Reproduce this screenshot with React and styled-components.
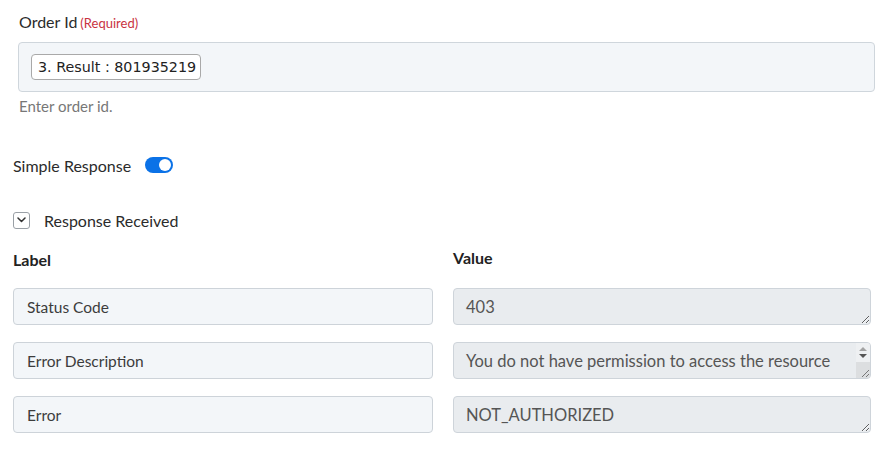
import React from 'react';
import styled, { createGlobalStyle } from 'styled-components';

const GlobalStyle = createGlobalStyle`
  html, body {
    margin: 0;
    padding: 0;
    background: #fff;
  }
  body {
    font-family: Lato, "Open Sans", sans-serif;
    color: #333;
  }
`;

const Page = styled.div`
  width: 858px;
  padding: 12px 0 0 13px;
`;

const FieldBlock = styled.div`
  padding-left: 6px;
  margin-right: -4px;
`;

const FieldLabel = styled.div`
  font-size: 16px;
  height: 20px;
  line-height: 20px;
  color: #2b2b2b;
  display: flex;
  align-items: baseline;
  gap: 3px;
`;

const Required = styled.span`
  font-size: 13px;
  color: #c9323f;
`;

const TokenBox = styled.div`
  margin: 10px 0 0 -1px;
  height: 48px;
  background: #f3f6f9;
  border: 1px solid #cfd6dc;
  border-radius: 4px;
  display: flex;
  align-items: center;
  padding: 0 12px;
`;

const Token = styled.span`
  font-family: "DejaVu Sans", Verdana, sans-serif;
  font-size: 14.3px;
  color: #222;
  background: #fff;
  border: 1px solid #a9a9a9;
  border-radius: 4px;
  padding: 3px 4px 3px 6px;
  line-height: 18px;
`;

const Hint = styled.div`
  margin-top: 5px;
  font-size: 15px;
  color: #777;
  line-height: 18px;
`;

const ToggleRow = styled.div`
  margin-top: 40px;
  display: flex;
  align-items: center;
  gap: 14px;
  font-size: 16px;
  color: #2b2b2b;
  height: 20px;
`;

const Switch = styled.span`
  width: 28px;
  height: 16px;
  border-radius: 8px;
  background: ${p => (p.$on ? '#0b72e7' : '#ccc')};
  position: relative;
  display: inline-block;

  &::after {
    content: '';
    position: absolute;
    top: 2px;
    left: ${p => (p.$on ? '14px' : '2px')};
    width: 12px;
    height: 12px;
    border-radius: 50%;
    background: #fff;
  }
`;

const CollapseRow = styled.div`
  margin-top: 35px;
  display: flex;
  align-items: center;
  gap: 14px;
  font-size: 16px;
  color: #2b2b2b;
  height: 20px;
`;

const ChevronBox = styled.span`
  width: 15px;
  height: 15px;
  border: 1px solid #9aa0a6;
  border-radius: 3px;
  display: flex;
  align-items: center;
  justify-content: center;
`;

const Grid = styled.div`
  margin-top: 20px;
  display: grid;
  grid-template-columns: 420px 418px;
  column-gap: 20px;
  row-gap: 17px;
`;

const HeadCell = styled.div`
  font-weight: 700;
  font-size: 16px;
  color: #222;
  line-height: 20px;
  position: relative;
  top: ${p => p.$up || 0}px;
  margin-bottom: 1px;
`;

const LabelInput = styled.div`
  height: 37px;
  box-sizing: border-box;
  background: #f3f6f9;
  border: 1px solid #cdd3d9;
  border-radius: 4px;
  padding: 0 13px;
  display: flex;
  align-items: center;
  font-size: 15.5px;
  color: #3c3c3c;
`;

const ValueCell = styled.div`
  position: relative;
`;

const ValueArea = styled.textarea`
  display: block;
  width: 100%;
  height: 37px;
  box-sizing: border-box;
  margin: 0;
  background: #e9ecef;
  border: 1px solid #ced4da;
  border-radius: 4px;
  padding: 5px ${p => (p.$scroll ? '30px' : '12px')} 5px 12px;
  font-family: Lato, "Open Sans", sans-serif;
  font-size: 16.5px;
  line-height: 26px;
  color: #555;
  resize: vertical;
  overflow: hidden;
  outline: none;
`;

/* scrollbar painted over the long description field */
const ScrollStrip = styled.div`
  position: absolute;
  top: 1px;
  right: 1px;
  bottom: 1px;
  width: 14px;
  display: flex;
  flex-direction: column;
  border-radius: 0 3px 3px 0;
  overflow: hidden;
`;

const ScrollArrows = styled.div`
  height: 19px;
  background: #eef0f2;
  display: flex;
  flex-direction: column;
  align-items: center;
  justify-content: center;
  gap: 3px;
`;

const Arrow = styled.span`
  width: 0;
  height: 0;
  border-left: 4px solid transparent;
  border-right: 4px solid transparent;
  ${p => (p.$down ? 'border-top: 4px solid #555;' : 'border-bottom: 4px solid #a3a3a3;')}
`;

const ScrollTrack = styled.div`
  flex: 1;
  background: #dcdee0;
  display: flex;
  align-items: flex-end;
  justify-content: flex-end;
`;

const Grip = () => (
  <svg width="10" height="10" viewBox="0 0 10 10">
    <path d="M9 2L2 9M9 6L6 9" stroke="#777" strokeWidth="1" />
  </svg>
);

const rows = [
  { label: 'Status Code', value: '403' },
  { label: 'Error Description', value: 'You do not have permission to access the resource requested.', scroll: true },
  { label: 'Error', value: 'NOT_AUTHORIZED' },
];

export default function App() {
  return (
    <>
      <GlobalStyle />
      <Page>
        <FieldBlock>
          <FieldLabel>
            Order Id<Required>(Required)</Required>
          </FieldLabel>
          <TokenBox>
            <Token>3. Result : 801935219</Token>
          </TokenBox>
          <Hint>Enter order id.</Hint>
        </FieldBlock>

        <ToggleRow>
          Simple Response
          <Switch $on />
        </ToggleRow>

        <CollapseRow>
          <ChevronBox>
            <svg width="9" height="6" viewBox="0 0 9 6" fill="none">
              <path d="M1 1l3.5 3.5L8 1" stroke="#333" strokeWidth="1.5" strokeLinecap="round" strokeLinejoin="round" />
            </svg>
          </ChevronBox>
          Response Received
        </CollapseRow>

        <Grid>
          <HeadCell>Label</HeadCell>
          <HeadCell $up={-2}>Value</HeadCell>
          {rows.map(r => (
            <React.Fragment key={r.label}>
              <LabelInput>{r.label}</LabelInput>
              <ValueCell>
                <ValueArea readOnly value={r.value} $scroll={r.scroll} />
                {r.scroll && (
                  <ScrollStrip>
                    <ScrollArrows>
                      <Arrow />
                      <Arrow $down />
                    </ScrollArrows>
                    <ScrollTrack>
                      <Grip />
                    </ScrollTrack>
                  </ScrollStrip>
                )}
              </ValueCell>
            </React.Fragment>
          ))}
        </Grid>
      </Page>
    </>
  );
}
